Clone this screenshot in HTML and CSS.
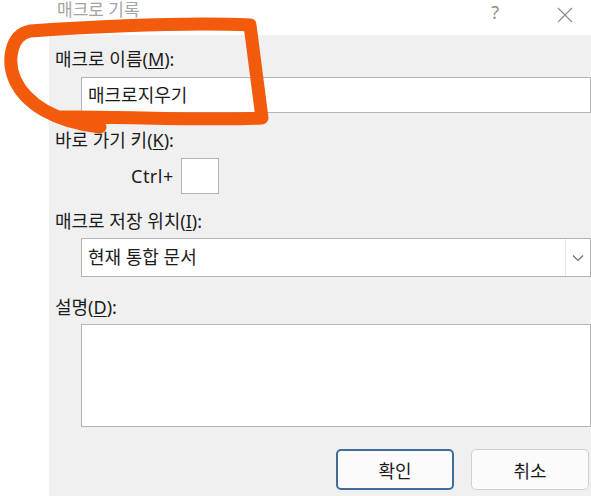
FILE: index.html
```html
<!DOCTYPE html>
<html>
<head>
    <title>매크로 기록</title>
    <link rel="stylesheet" href="styles.css">
</head>
<body>
    <div class="titlebar">
        <span class="title">매크로 기록</span>
        <span class="help">?</span>
        <span class="close">
            <svg width="16" height="16" viewBox="0 0 16 16">
                <path d="M1 1 L15 15 M15 1 L1 15" stroke="#8a8a8a" stroke-width="1.1" fill="none"/>
            </svg>
        </span>
    </div>

    <div class="dialog">
        <div class="label">매크로 이름(<u>M</u>):</div>
        <div class="field name-field">매크로지우기</div>

        <div class="label gap">바로 가기 키(<u>K</u>):</div>
        <div class="shortcut-row">
            <span class="ctrl">Ctrl+</span>
            <span class="key-box"></span>
        </div>

        <div class="label gap">매크로 저장 위치(<u>I</u>):</div>
        <div class="field combo">
            <span class="combo-text">현재 통합 문서</span>
            <span class="combo-button">
                <svg width="12" height="8" viewBox="0 0 12 8">
                    <path d="M1 1.5 L6 6.5 L11 1.5" stroke="#6b6b6b" stroke-width="1.1" fill="none"/>
                </svg>
            </span>
        </div>

        <div class="label gap desc-label">설명(<u>D</u>):</div>
        <div class="field memo"></div>

        <div class="buttons">
            <button class="btn btn-default">확인</button>
            <button class="btn">취소</button>
        </div>
    </div>

    <!-- hand-drawn highlight over the name field -->
    <svg class="scribble" width="591" height="496" viewBox="0 0 591 496">
        <path d="M62 117 C120 116, 200 121, 262 118 L250 25 C180 22, 90 27, 30 31 C10 35, 7 62, 15 80 C26 104, 55 122, 100 127"
              stroke="#f25a0c" stroke-width="13" stroke-linecap="round" stroke-linejoin="round" fill="none"/>
    </svg>
</body>
</html>
```

FILE: styles.css
```css
body {
    margin: 0;
    width: 591px;
    height: 496px;
    overflow: hidden;
    background: #ffffff;
    font-family: "Noto Sans", "Noto Sans CJK KR", sans-serif;
    font-size: 18px;
    color: #1b1b1b;
    position: relative;
}

.titlebar {
    height: 35px;
    display: flex;
    align-items: flex-start;
    padding-left: 57px;
    color: #a3a3a3;
}

.title {
    line-height: 18px;
    margin-top: 1px;
    font-size: 17px;
    flex: 1;
}

.help {
    font-size: 18px;
    line-height: 18px;
    margin-top: 3px;
    margin-right: 58px;
    color: #8f8f8f;
}

.close {
    margin-top: 4px;
    margin-right: 18px;
}

.dialog {
    margin-left: 49px;
    height: 461px;
    background: #f0f0f0;
    padding: 12px 0 0 6px;
    box-sizing: border-box;
}

.label {
    line-height: 24px;
    margin-bottom: 6px;
}

.label.gap {
    margin-top: 15px;
}

.label.desc-label {
    margin-top: 18px;
}

.label u {
    text-underline-offset: 2px;
}

.field {
    margin-left: 26px;
    background: #ffffff;
    border: 1px solid #b4b4b4;
    box-sizing: border-box;
}

.name-field {
    height: 36px;
    line-height: 34px;
    padding-left: 6px;
}

.shortcut-row {
    display: flex;
    align-items: center;
    padding-left: 76px;
    height: 36px;
}

.ctrl {
    margin-right: 7px;
    letter-spacing: 0.5px;
}

.key-box {
    width: 38px;
    height: 36px;
    background: #ffffff;
    border: 1px solid #b4b4b4;
    box-sizing: border-box;
}

.combo {
    height: 39px;
    display: flex;
    margin-top: -1px;
}

.combo-text {
    flex: 1;
    line-height: 37px;
    padding-left: 6px;
}

.combo-button {
    width: 24px;
    border-left: 1px solid #e6e6e6;
    display: flex;
    align-items: center;
    justify-content: center;
}

.memo {
    height: 103px;
    margin-top: -1px;
}

.buttons {
    display: flex;
    justify-content: flex-end;
    gap: 17px;
    margin-top: 22px;
    padding-right: 2px;
}

.btn {
    width: 118px;
    height: 41px;
    font-family: "Noto Sans", "Noto Sans CJK KR", sans-serif;
    font-size: 18px;
    color: #1b1b1b;
    background: #fbfbfb;
    border: 1px solid #d0d0d0;
    border-radius: 5px;
}

.btn-default {
    border: 2px solid #3f6e9e;
}

.scribble {
    position: absolute;
    left: 0;
    top: 0;
    pointer-events: none;
}
```
